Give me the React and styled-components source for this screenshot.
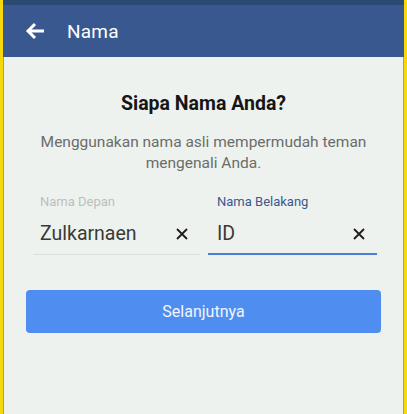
import styled, { createGlobalStyle } from 'styled-components'

const GlobalStyle = createGlobalStyle`
  html, body {
    margin: 0;
    padding: 0;
    background: #eef2ee;
  }
  * { box-sizing: border-box; }
`

const Frame = styled.div`
  width: 407px;
  height: 414px;
  display: flex;
  flex-direction: column;
  background: #eef2ee;
  border-left: 3px solid #f5d90a;
  border-right: 3px solid #f5d90a;
  box-shadow: inset 1px 0 0 #e0902a, inset -1px 0 0 #e0902a;
  font-family: Roboto, "Liberation Sans", sans-serif;
  overflow: hidden;
`

const StatusBar = styled.div`
  height: 5px;
  background: #2b4a72;
`

const AppBar = styled.div`
  height: 52px;
  background: #3a5890;
  display: flex;
  align-items: center;
  padding-left: 21px;
  color: #fff;
`

const BackButton = styled.div`
  width: 22px;
  height: 22px;
  display: flex;
  align-items: center;
  justify-content: center;
  margin-right: 21px;
`

const AppTitle = styled.div`
  font-size: 19px;
  letter-spacing: 0.2px;
`

const Content = styled.div`
  flex: 1;
  display: flex;
  flex-direction: column;
  align-items: center;
  padding: 35px 23px 0;
`

const Heading = styled.h1`
  margin: 0;
  font-size: 19.5px;
  font-weight: 700;
  color: #151515;
  line-height: 24px;
`

const Lead = styled.p`
  margin: 16px 0 0;
  font-size: 15.5px;
  line-height: 21px;
  color: #6a6d6a;
  text-align: center;
`

const Fields = styled.div`
  align-self: stretch;
  display: grid;
  grid-template-columns: 167px 169px;
  gap: 8px;
  margin: 20px 0 0 7px;
`

const Field = styled.div`
  display: flex;
  flex-direction: column;
  border-bottom: ${p => (p.$active ? '2px solid #4a7ed8' : '1px solid #dcdfdc')};
  padding: 0 0 ${p => (p.$active ? '7px' : '8px')} ${p => (p.$active ? '9px' : '7px')};
`

const Label = styled.label`
  font-size: 13px;
  line-height: 16px;
  color: ${p => (p.$active ? '#3a5890' : '#bcbfbc')};
`

const InputRow = styled.div`
  display: flex;
  align-items: center;
  justify-content: space-between;
  margin-top: 12px;
  padding-right: 12px;
`

const Value = styled.span`
  font-size: 19.5px;
  line-height: 24px;
  color: #383a38;
`

const Clear = styled.span`
  display: flex;
  width: 12px;
  height: 12px;
`

const NextButton = styled.button`
  align-self: stretch;
  margin-top: 35px;
  height: 43px;
  border: none;
  border-radius: 4px;
  background: #4f8ef0;
  color: #f2f6fd;
  font-family: inherit;
  font-size: 16px;
`

const CloseIcon = () => (
  <svg width="12" height="12" viewBox="0 0 12 12">
    <path d="M1 1 L11 11 M11 1 L1 11" stroke="#1c1c1c" strokeWidth="1.8" />
  </svg>
)

const NameField = ({ label, value, active }) => (
  <Field $active={active}>
    <Label $active={active}>{label}</Label>
    <InputRow>
      <Value>{value}</Value>
      <Clear><CloseIcon /></Clear>
    </InputRow>
  </Field>
)

export default function App() {
  return (
    <>
      <GlobalStyle />
      <Frame>
        <StatusBar />
        <AppBar>
          <BackButton>
            <svg width="20" height="18" viewBox="0 0 20 18">
              <path d="M19 9 H3 M10 2 L3 9 L10 16" stroke="#fff" strokeWidth="3" fill="none" strokeLinejoin="miter" />
            </svg>
          </BackButton>
          <AppTitle>Nama</AppTitle>
        </AppBar>
        <Content>
          <Heading>Siapa Nama Anda?</Heading>
          <Lead>
            Menggunakan nama asli mempermudah teman
            <br />
            mengenali Anda.
          </Lead>
          <Fields>
            <NameField label="Nama Depan" value="Zulkarnaen" />
            <NameField label="Nama Belakang" value="ID" active />
          </Fields>
          <NextButton>Selanjutnya</NextButton>
        </Content>
      </Frame>
    </>
  )
}
